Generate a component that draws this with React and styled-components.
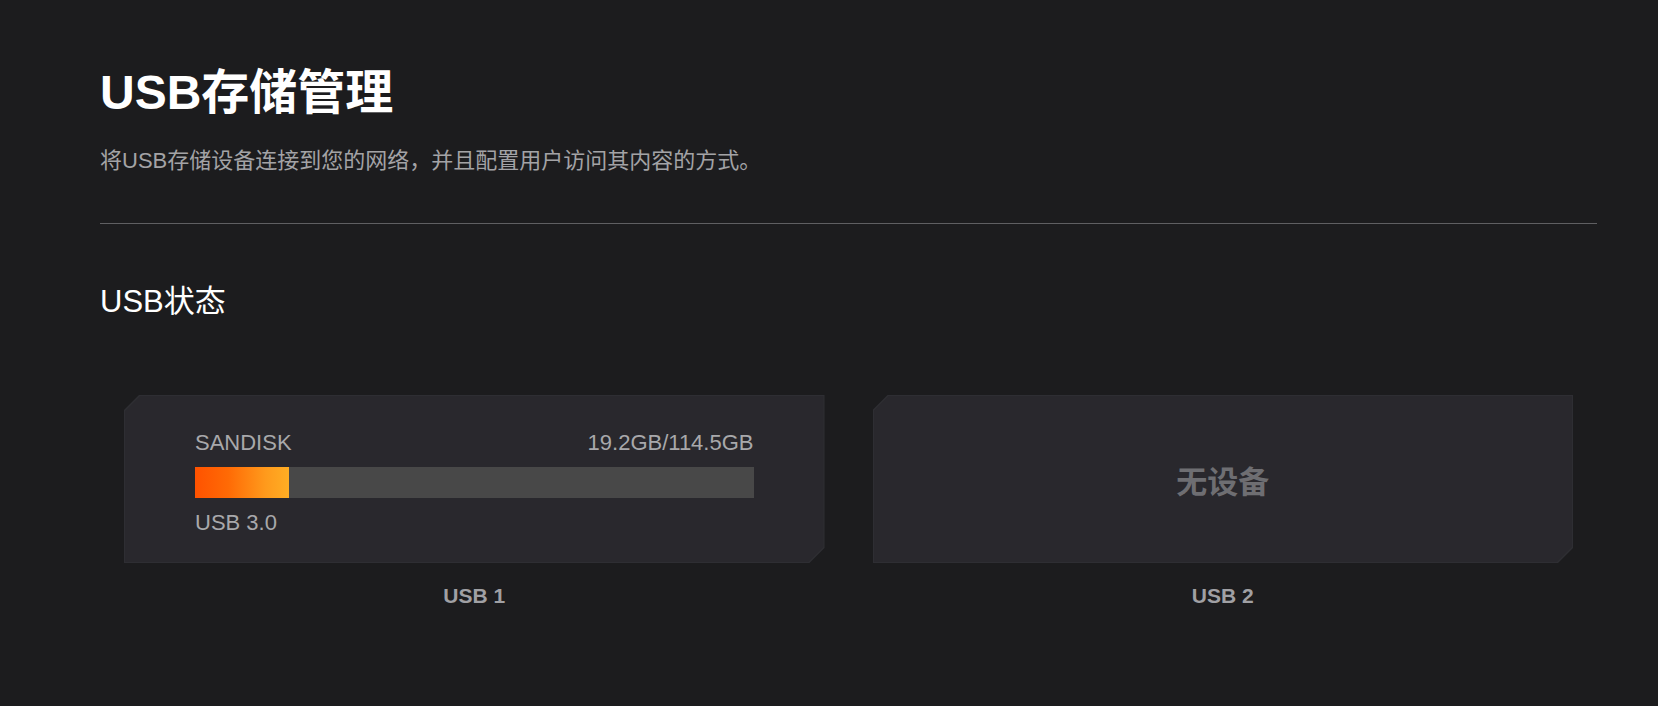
import React from 'react'
import styled, { createGlobalStyle } from 'styled-components'

const GlobalStyle = createGlobalStyle`
    html, body {
        margin: 0;
        padding: 0;
        background: #1c1c1e;
    }
    body {
        font-family: "Liberation Sans", "Noto Sans CJK SC", sans-serif;
        color: #fff;
    }
`

const ports = [
    { name: 'USB 1', device: { label: 'SANDISK', used: 19.2, total: 114.5, speed: 'USB 3.0' } },
    { name: 'USB 2', device: null },
]

const UsbCard = ({ port }) => {
    const { device } = port
    return (
        <PortColumn>
            <CardEdge>
                <Card>
                    {device ? (
                        <DeviceInfo>
                            <InfoRow>
                                <InfoText>{device.label}</InfoText>
                                <InfoText>{device.used}GB/{device.total}GB</InfoText>
                            </InfoRow>
                            <Bar>
                                <BarFill style={{ width: `${(device.used / device.total) * 100}%` }} />
                            </Bar>
                            <InfoText>{device.speed}</InfoText>
                        </DeviceInfo>
                    ) : (
                        <Empty>无设备</Empty>
                    )}
                </Card>
            </CardEdge>
            <PortName>{port.name}</PortName>
        </PortColumn>
    )
}

const App = () => {
    return (
        <>
            <GlobalStyle />
            <Page>
                <Title>USB存储管理</Title>
                <Subtitle>将USB存储设备连接到您的网络，并且配置用户访问其内容的方式。</Subtitle>
                <Divider />
                <SectionTitle>USB状态</SectionTitle>
                <CardGrid>
                    {ports.map((port) => (
                        <UsbCard key={port.name} port={port} />
                    ))}
                </CardGrid>
            </Page>
        </>
    )
}

const Page = styled.div`
    display: flex;
    flex-direction: column;
    padding: 64px 61px 0 100px;
    min-height: 706px;
    box-sizing: border-box;
`

const Title = styled.h1`
    margin: 0;
    font-size: 48px;
    line-height: 58px;
    font-weight: 700;
    color: #fff;
`

const Subtitle = styled.p`
    margin: 24px 0 0;
    font-size: 22px;
    line-height: 30px;
    color: #a3a3a6;
`

const Divider = styled.div`
    margin-top: 47px;
    height: 1px;
    background: #5f5f62;
`

const SectionTitle = styled.h2`
    margin: 58px 0 0;
    font-size: 31px;
    line-height: 40px;
    font-weight: 400;
    color: #fff;
`

const CardGrid = styled.div`
    display: grid;
    grid-template-columns: 1fr 1fr;
    gap: 48px;
    margin: 73px 24px 0;
`

const PortColumn = styled.div`
    display: flex;
    flex-direction: column;
    align-items: center;
    gap: 19px;
`

const chamfer = `polygon(15px 0, 100% 0, 100% calc(100% - 15px), calc(100% - 15px) 100%, 0 100%, 0 15px)`

const CardEdge = styled.div`
    width: 100%;
    padding: 1px;
    box-sizing: border-box;
    background: #2e2e33;
    clip-path: ${chamfer};
`

const Card = styled.div`
    height: 166px;
    background: #29282d;
    clip-path: ${chamfer};
    display: flex;
    align-items: center;
    justify-content: center;
    padding: 0 70px;
`

const DeviceInfo = styled.div`
    width: 100%;
    display: flex;
    flex-direction: column;
    margin-top: 8px;
`

const InfoRow = styled.div`
    display: flex;
    justify-content: space-between;
    margin-bottom: 11px;
`

const InfoText = styled.span`
    font-size: 22px;
    line-height: 26px;
    color: #a8a8ab;
`

const Bar = styled.div`
    height: 31px;
    background: #484848;
    margin-bottom: 12px;
`

const BarFill = styled.div`
    height: 100%;
    background: linear-gradient(90deg, #ff5200 0%, #ff6a05 35%, #ff9a1c 75%, #ffae24 100%);
`

const Empty = styled.span`
    font-size: 31px;
    font-weight: 700;
    color: #6e6e72;
`

const PortName = styled.span`
    font-size: 21px;
    line-height: 28px;
    font-weight: 700;
    color: #a0a0a4;
`

export default App
